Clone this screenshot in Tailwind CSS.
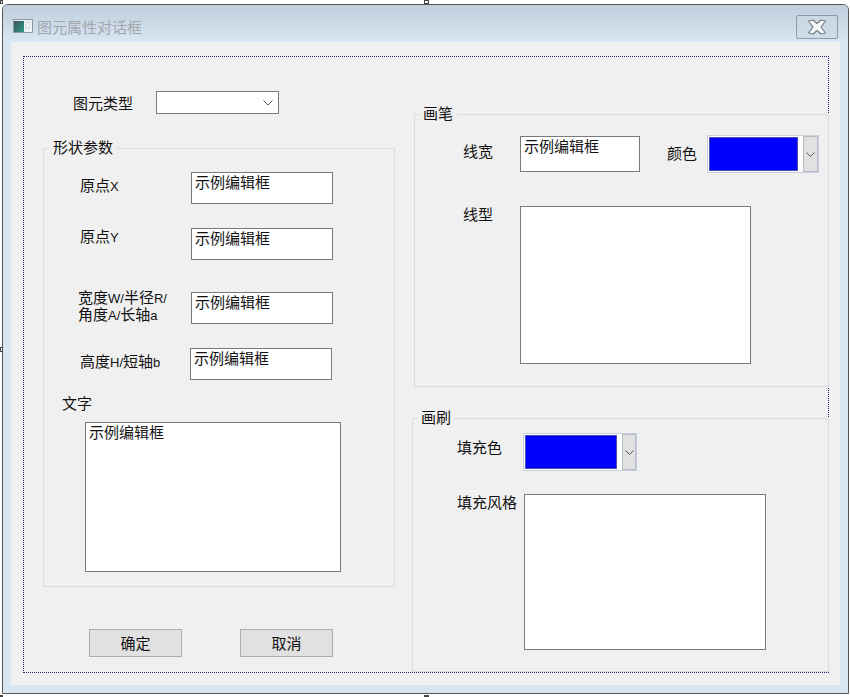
<!DOCTYPE html>
<html lang="zh">
<head>
  <meta charset="UTF-8" />
  <title>图元属性对话框</title>
  <script src="https://cdn.jsdelivr.net/npm/@tailwindcss/browser@4"></script>
</head>
<body class="relative w-[850px] h-[697px] overflow-hidden bg-white text-[15px] leading-[18px] text-[#111] font-['Noto_Sans_CJK_SC','Liberation_Sans',sans-serif]">

  <!-- resize handles of the dialog editor -->
  <div class="absolute left-0 top-0 w-[3px] h-[4px] border border-[#444] bg-white"></div>
  <div class="absolute left-[424px] top-0 w-[5px] h-[4px] border border-[#444] bg-white"></div>
  <div class="absolute left-0 top-[347px] w-[3px] h-[5px] border border-[#444] bg-white"></div>
  <div class="absolute left-0 top-[695px] w-[3px] h-[2px] border border-[#444] bg-white"></div>
  <div class="absolute left-[424px] top-[695px] w-[5px] h-[2px] bg-[#444]"></div>

  <div class="ml-[2px] mt-[4px] w-[847px] h-[690px] border border-[#555] rounded-t-[6px] bg-[#d9e5f2] flex flex-col overflow-hidden">
    <!-- title bar -->
    <div class="h-[37px] shrink-0 flex items-center pl-[10px] pr-[10px] bg-gradient-to-b from-[#bfcedc] to-[#d9e6f3]">
      <svg class="w-[20px] h-[14px] mt-[5px]" viewBox="0 0 20 14">
        <defs>
          <linearGradient id="iconFill" x1="0" y1="0" x2="1" y2="1">
            <stop offset="0" stop-color="#3c4f5c" />
            <stop offset="1" stop-color="#2f9a86" />
          </linearGradient>
        </defs>
        <rect x="0.5" y="0.5" width="19" height="13" fill="#eef2f4" stroke="#8a9aa2" />
        <rect x="1" y="2" width="10" height="11" fill="url(#iconFill)" />
        <rect x="13" y="3" width="3" height="6" fill="#fff" stroke="#9fb0b8" stroke-width="0.5" />
      </svg>
      <span class="ml-[4px] mt-[7px] text-[#a2a7ad]">图元属性对话框</span>
      <div class="ml-auto mt-[6px] w-[42px] h-[24px] border border-[#8c9bab] rounded-[2px] bg-[#cbd8e5]/60 flex items-center justify-center">
        <svg class="w-[20px] h-[16px]" viewBox="0 0 20 16">
          <path d="M1.500 2 L6 1 L10 4.500 L14 1 L18.500 2 L14 8 L18.500 14 L14 15 L10 11.500 L6 15 L1.500 14 L6 8 Z" fill="#f6f8fa" stroke="#757f88" stroke-width="1.200" stroke-linejoin="round" />
        </svg>
      </div>
    </div>

    <!-- client area -->
    <div class="mx-[8px] w-[829px] h-[643px] bg-[#f0f0f0] pl-[12px] pt-[14px]">
      <div class="w-[806px] h-[617px] border border-dotted border-[#2a1a7a] flex">

        <!-- left column -->
        <div class="w-[388px] shrink-0 pl-[19px]">
          <div class="flex items-center h-[23px] mt-[34px] ml-[30px]">
            <span class="w-[83px]">图元类型</span>
            <div class="w-[123px] h-[23px] border border-[#7a7a7a] bg-white flex items-center justify-end pr-[5px]">
              <svg class="w-[10px] h-[6px]" viewBox="0 0 10 6"><path d="M0.500 0.500 L5 5 L9.500 0.500" fill="none" stroke="#555" /></svg>
            </div>
          </div>

          <div class="relative w-[352px] h-[439px] mt-[34px] border border-[#dcdcdc]">
            <span class="absolute left-[5px] top-[-11px] px-[4px] bg-[#f0f0f0]">形状参数</span>

            <div class="flex h-[32px] mt-[23px] ml-[36px]">
              <span class="w-[111px] pt-[4px]">原点<span class="text-[13px] font-['Liberation_Sans']">X</span></span>
              <div class="w-[142px] h-[32px] border border-[#7a7a7a] bg-white pl-[3px]">示例编辑框</div>
            </div>
            <div class="flex h-[32px] mt-[24px] ml-[36px]">
              <span class="w-[111px] -mt-[1px]">原点<span class="text-[13px] font-['Liberation_Sans']">Y</span></span>
              <div class="w-[142px] h-[32px] border border-[#7a7a7a] bg-white pl-[3px]">示例编辑框</div>
            </div>
            <div class="flex h-[32px] mt-[32px] ml-[34px]">
              <span class="w-[113px] leading-[15px] -mt-[3px]">宽度<span class="text-[13px] font-['Liberation_Sans']">W/</span>半径<span class="text-[13px] font-['Liberation_Sans']">R/</span><br />角度<span class="text-[13px] font-['Liberation_Sans']">A/</span>长轴<span class="text-[13px] font-['Liberation_Sans']">a</span></span>
              <div class="w-[142px] h-[32px] border border-[#7a7a7a] bg-white pl-[3px]">示例编辑框</div>
            </div>
            <div class="flex h-[32px] mt-[24px] ml-[36px]">
              <span class="w-[110px] pt-[4px]">高度<span class="text-[13px] font-['Liberation_Sans']">H/</span>短轴<span class="text-[13px] font-['Liberation_Sans']">b</span></span>
              <div class="w-[142px] h-[32px] border border-[#7a7a7a] bg-white pl-[3px]">示例编辑框</div>
            </div>
            <div class="h-[18px] mt-[14px] ml-[18px]">文字</div>
            <div class="w-[256px] h-[150px] mt-[10px] ml-[41px] border border-[#7a7a7a] bg-white pl-[3px]">示例编辑框</div>
          </div>

          <div class="flex mt-[42px] ml-[46px] gap-[58px]">
            <button class="w-[93px] h-[28px] border border-[#adadad] bg-[#e1e1e1]">确定</button>
            <button class="w-[93px] h-[28px] border border-[#adadad] bg-[#e1e1e1]">取消</button>
          </div>
        </div>

        <!-- right column -->
        <div class="w-[417px] shrink-0 -mr-px">
          <div class="relative ml-[2px] w-[415px] h-[273px] mt-[57px] border border-[#dcdcdc] bg-[#f0f0f0]">
            <span class="absolute left-[4px] top-[-11px] px-[4px] bg-[#f0f0f0]">画笔</span>
            <div class="flex mt-[21px] ml-[48px]">
              <span class="w-[57px] pt-[6px]">线宽</span>
              <div class="w-[120px] h-[36px] border border-[#7a7a7a] bg-white pl-[3px]">示例编辑框</div>
              <span class="ml-[27px] w-[40px] pt-[8px]">颜色</span>
              <div class="w-[112px] h-[38px] -mt-[1px] border border-[#c6cfdb] bg-white flex items-center pl-[1px]">
                <div class="w-[89px] h-[34px] border border-[#4d4db0] bg-[#0000ff]"></div>
                <div class="ml-[5px] w-[15px] h-[36px] border border-[#b5bcc5] bg-[#e1e1e1] flex items-center justify-center">
                  <svg class="w-[9px] h-[5px]" viewBox="0 0 9 5"><path d="M0.500 0.500 L4.500 4.500 L8.500 0.500" fill="none" stroke="#555" /></svg>
                </div>
              </div>
            </div>
            <div class="flex mt-[33px] ml-[48px]">
              <span class="w-[57px] -mt-[1px]">线型</span>
              <div class="w-[231px] h-[158px] border border-[#7a7a7a] bg-white"></div>
            </div>
          </div>

          <div class="relative w-[417px] h-[254px] mt-[31px] border border-[#dcdcdc] bg-[#f0f0f0]">
            <span class="absolute left-[4px] top-[-11px] px-[4px] bg-[#f0f0f0]">画刷</span>
            <div class="flex mt-[14px] ml-[44px]">
              <span class="w-[66px] pt-[5px]">填充色</span>
              <div class="w-[114px] h-[38px] border border-[#c6cfdb] bg-white flex items-center pl-[1px]">
                <div class="w-[92px] h-[34px] border border-[#4d4db0] bg-[#0000ff]"></div>
                <div class="ml-[5px] w-[14px] h-[36px] border border-[#b5bcc5] bg-[#e1e1e1] flex items-center justify-center">
                  <svg class="w-[9px] h-[5px]" viewBox="0 0 9 5"><path d="M0.500 0.500 L4.500 4.500 L8.500 0.500" fill="none" stroke="#555" /></svg>
                </div>
              </div>
            </div>
            <div class="flex mt-[23px] ml-[44px]">
              <span class="w-[67px] -mt-[1px]">填充风格</span>
              <div class="w-[242px] h-[156px] border border-[#7a7a7a] bg-white"></div>
            </div>
          </div>
        </div>

      </div>
    </div>
  </div>
</body>
</html>
